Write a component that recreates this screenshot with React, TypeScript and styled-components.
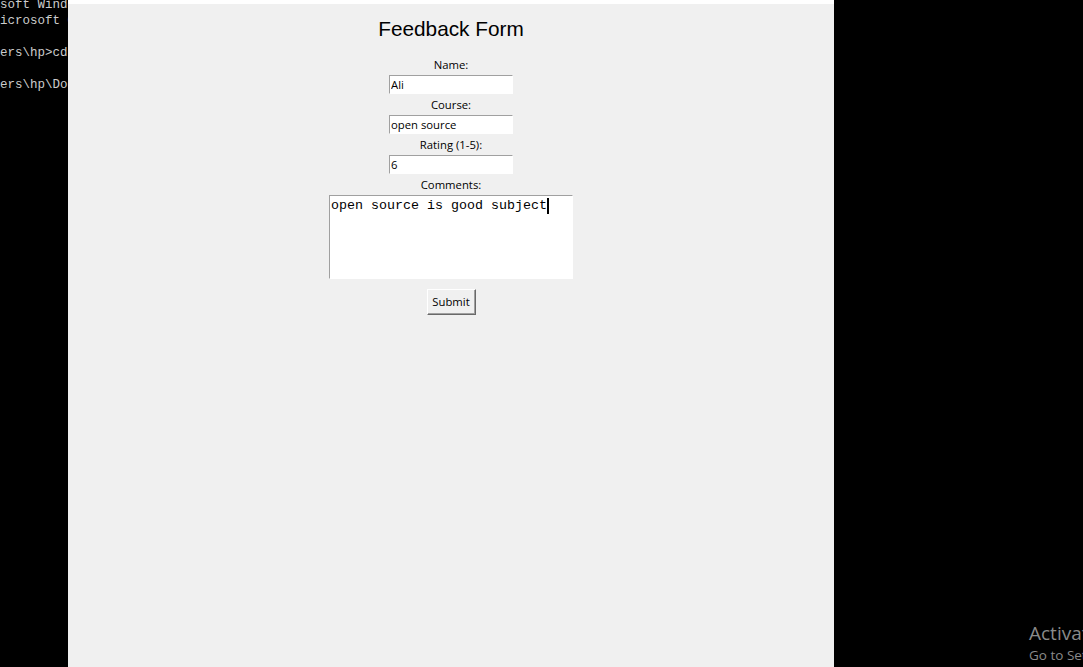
import React from "react";
import styled, { createGlobalStyle } from "styled-components";

const Global = createGlobalStyle`
  html, body { margin: 0; padding: 0; background: #000; }
  body { width: 1083px; height: 667px; overflow: hidden; }
`;

const Screen = styled.div`
  display: flex;
  width: 1083px;
  height: 667px;
  background: #000;
`;

const Terminal = styled.div`
  width: 68px;
  flex: none;
  overflow: hidden;
  color: #cccccc;
  font-family: "Liberation Mono", "DejaVu Sans Mono", monospace;
  font-size: 12.5px;
  line-height: 16px;
  white-space: pre;
  margin-top: -3px;
`;

const Window = styled.div`
  width: 766px;
  flex: none;
  display: flex;
  flex-direction: column;
  background: #f0f0f0;
  border-top: 4px solid #ffffff;
  box-sizing: border-box;
`;

const Form = styled.div`
  display: flex;
  flex-direction: column;
  align-items: center;
`;

const Title = styled.h1`
  margin: 0;
  padding: 10px 0;
  height: 30px;
  line-height: 30px;
  font-family: "Liberation Sans", Arial, sans-serif;
  font-weight: normal;
  font-size: 20.8px;
  color: #000;
`;

const Label = styled.div`
  height: 21px;
  line-height: 21px;
  font-family: "Open Sans", "Noto Sans", sans-serif;
  font-size: 11.3px;
  color: #000;
`;

const Entry = styled.input`
  box-sizing: border-box;
  width: 124px;
  height: 19px;
  margin: 0;
  padding: 0 1px;
  border-style: solid;
  border-width: 1px;
  border-color: #a0a0a0 #ffffff #ffffff #a0a0a0;
  background: #fff;
  font-family: "Open Sans", "Noto Sans", sans-serif;
  font-size: 11.3px;
  color: #000;
  outline: none;
`;

const TextBox = styled.div`
  box-sizing: border-box;
  width: 244px;
  height: 84px;
  padding: 2px 1px;
  border-style: solid;
  border-width: 1px;
  border-color: #a0a0a0 #ffffff #ffffff #a0a0a0;
  background: #fff;
  font-family: "Liberation Mono", "Courier New", monospace;
  font-size: 13.33px;
  line-height: 16px;
  color: #000;
  white-space: pre;
`;

const Caret = styled.span`
  display: inline-block;
  width: 2px;
  height: 16px;
  background: #000;
  vertical-align: top;
`;

const Button = styled.button`
  box-sizing: border-box;
  margin-top: 10px;
  width: 49px;
  height: 26px;
  padding: 0 0 1px 0;
  background: #f0f0f0;
  border-style: solid;
  border-width: 1px;
  border-color: #ffffff #696969 #696969 #ffffff;
  box-shadow: inset -1px -1px 0 #a0a0a0;
  font-family: "Open Sans", "Noto Sans", sans-serif;
  font-size: 11.3px;
  color: #000;
`;

const Backdrop = styled.div`
  flex: 1;
  display: flex;
  flex-direction: column;
  justify-content: flex-end;
  padding-left: 195px;
  padding-bottom: 2px;
  overflow: hidden;
  font-family: "Open Sans", "Noto Sans", sans-serif;
  color: #8a8a8a;
  white-space: nowrap;
`;

const WatermarkTitle = styled.div`
  font-size: 19px;
  line-height: 26px;
`;

const WatermarkSub = styled.div`
  font-size: 13.5px;
  line-height: 19px;
`;

const terminalLines = [
  "soft Windows [Version 10.0.19045]",
  "icrosoft Corporation. All rights reserved.",
  "",
  "ers\\hp>cd Documents",
  "",
  "ers\\hp\\Documents>python feedback.py",
];

export default function App() {
  return (
    <>
      <Global />
      <Screen>
        <Terminal>
          {terminalLines.map((l, i) => (
            <div key={i}>{l || " "}</div>
          ))}
        </Terminal>
        <Window>
          <Form>
            <Title>Feedback Form</Title>
            <Label>Name:</Label>
            <Entry value="Ali" readOnly />
            <Label>Course:</Label>
            <Entry value="open source" readOnly />
            <Label>Rating (1-5):</Label>
            <Entry value="6" readOnly />
            <Label>Comments:</Label>
            <TextBox>
              open source is good subject<Caret />
            </TextBox>
            <Button>Submit</Button>
          </Form>
        </Window>
        <Backdrop>
          <WatermarkTitle>Activate Windows</WatermarkTitle>
          <WatermarkSub>Go to Settings to activate Windows.</WatermarkSub>
        </Backdrop>
      </Screen>
    </>
  );
}
